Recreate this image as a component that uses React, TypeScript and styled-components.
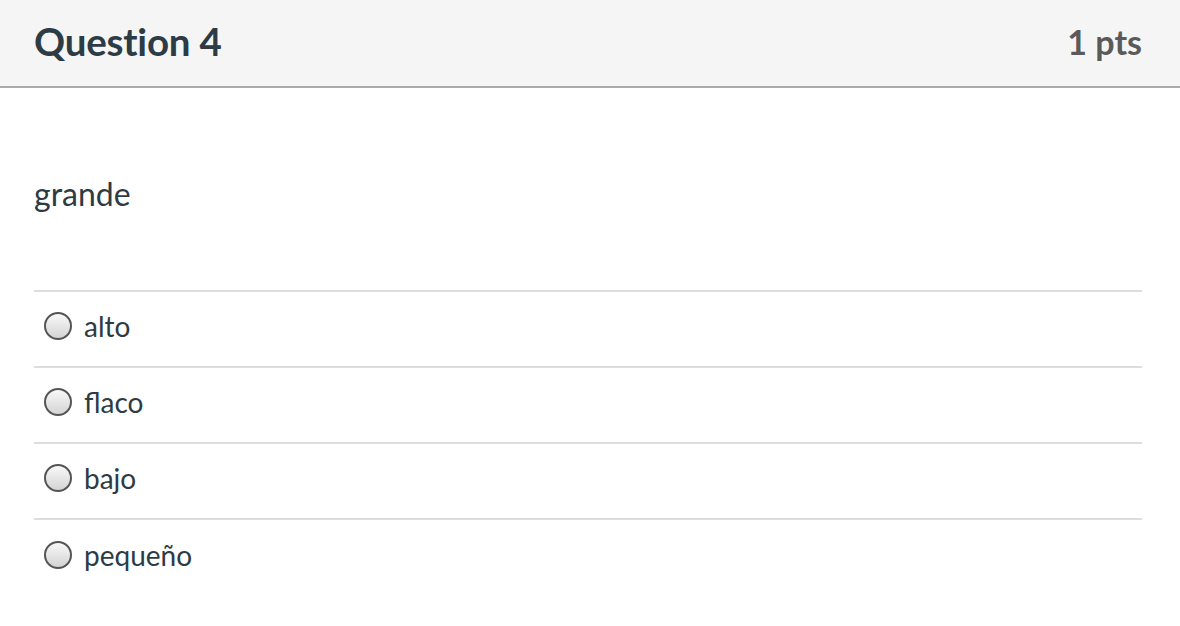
import React from "react";
import styled, { createGlobalStyle } from "styled-components";

const Global = createGlobalStyle`
  html, body { margin: 0; padding: 0; background: #fff; }
  body { font-family: Lato, "Noto Sans", sans-serif; color: #2d3b45; }
`;

const Card = styled.div`
  width: 1180px;
  height: 626px;
  background: #fff;
  overflow: hidden;
`;

const Header = styled.div`
  height: 88px;
  box-sizing: border-box;
  background: #f5f5f5;
  border-bottom: 2px solid #aaaaaa;
  display: flex;
  align-items: center;
  justify-content: space-between;
  padding: 0 38px 4px 34px;
`;

const Title = styled.h2`
  margin: 0;
  font-size: 38.5px;
  font-weight: 700;
  color: #2d3b45;
  letter-spacing: -0.2px;
`;

const Points = styled.div`
  font-size: 34px;
  font-weight: 700;
  color: #5a5a5a;
`;

const Body = styled.div`
  padding: 0 38px 0 34px;
`;

const Prompt = styled.div`
  font-size: 32px;
  height: 204px;
  display: flex;
  align-items: center;
  padding-top: 8px;
  box-sizing: border-box;
  border-bottom: 2px solid #dddddd;
`;

const Option = styled.label<{ $last?: boolean }>`
  display: flex;
  align-items: center;
  height: 76px;
  box-sizing: border-box;
  padding: 0 0 7px 10px;
  border-bottom: ${(p) => (p.$last ? "none" : "2px solid #dddddd")};
  font-size: 28px;
  color: #2d3b45;
`;

const Radio = styled.span`
  width: 28px;
  height: 28px;
  box-sizing: border-box;
  border-radius: 50%;
  border: 2px solid #555;
  background: linear-gradient(#f8f8f8, #d4d4d4);
  margin-right: 12px;
  flex-shrink: 0;
`;

const options = ["alto", "flaco", "bajo", "pequeño"];

export default function App() {
  return (
    <>
      <Global />
      <Card>
        <Header>
          <Title>Question 4</Title>
          <Points>1 pts</Points>
        </Header>
        <Body>
          <Prompt>grande</Prompt>
          {options.map((o, i) => (
            <Option key={o} $last={i === options.length - 1}>
              <Radio />
              {o}
            </Option>
          ))}
        </Body>
      </Card>
    </>
  );
}
